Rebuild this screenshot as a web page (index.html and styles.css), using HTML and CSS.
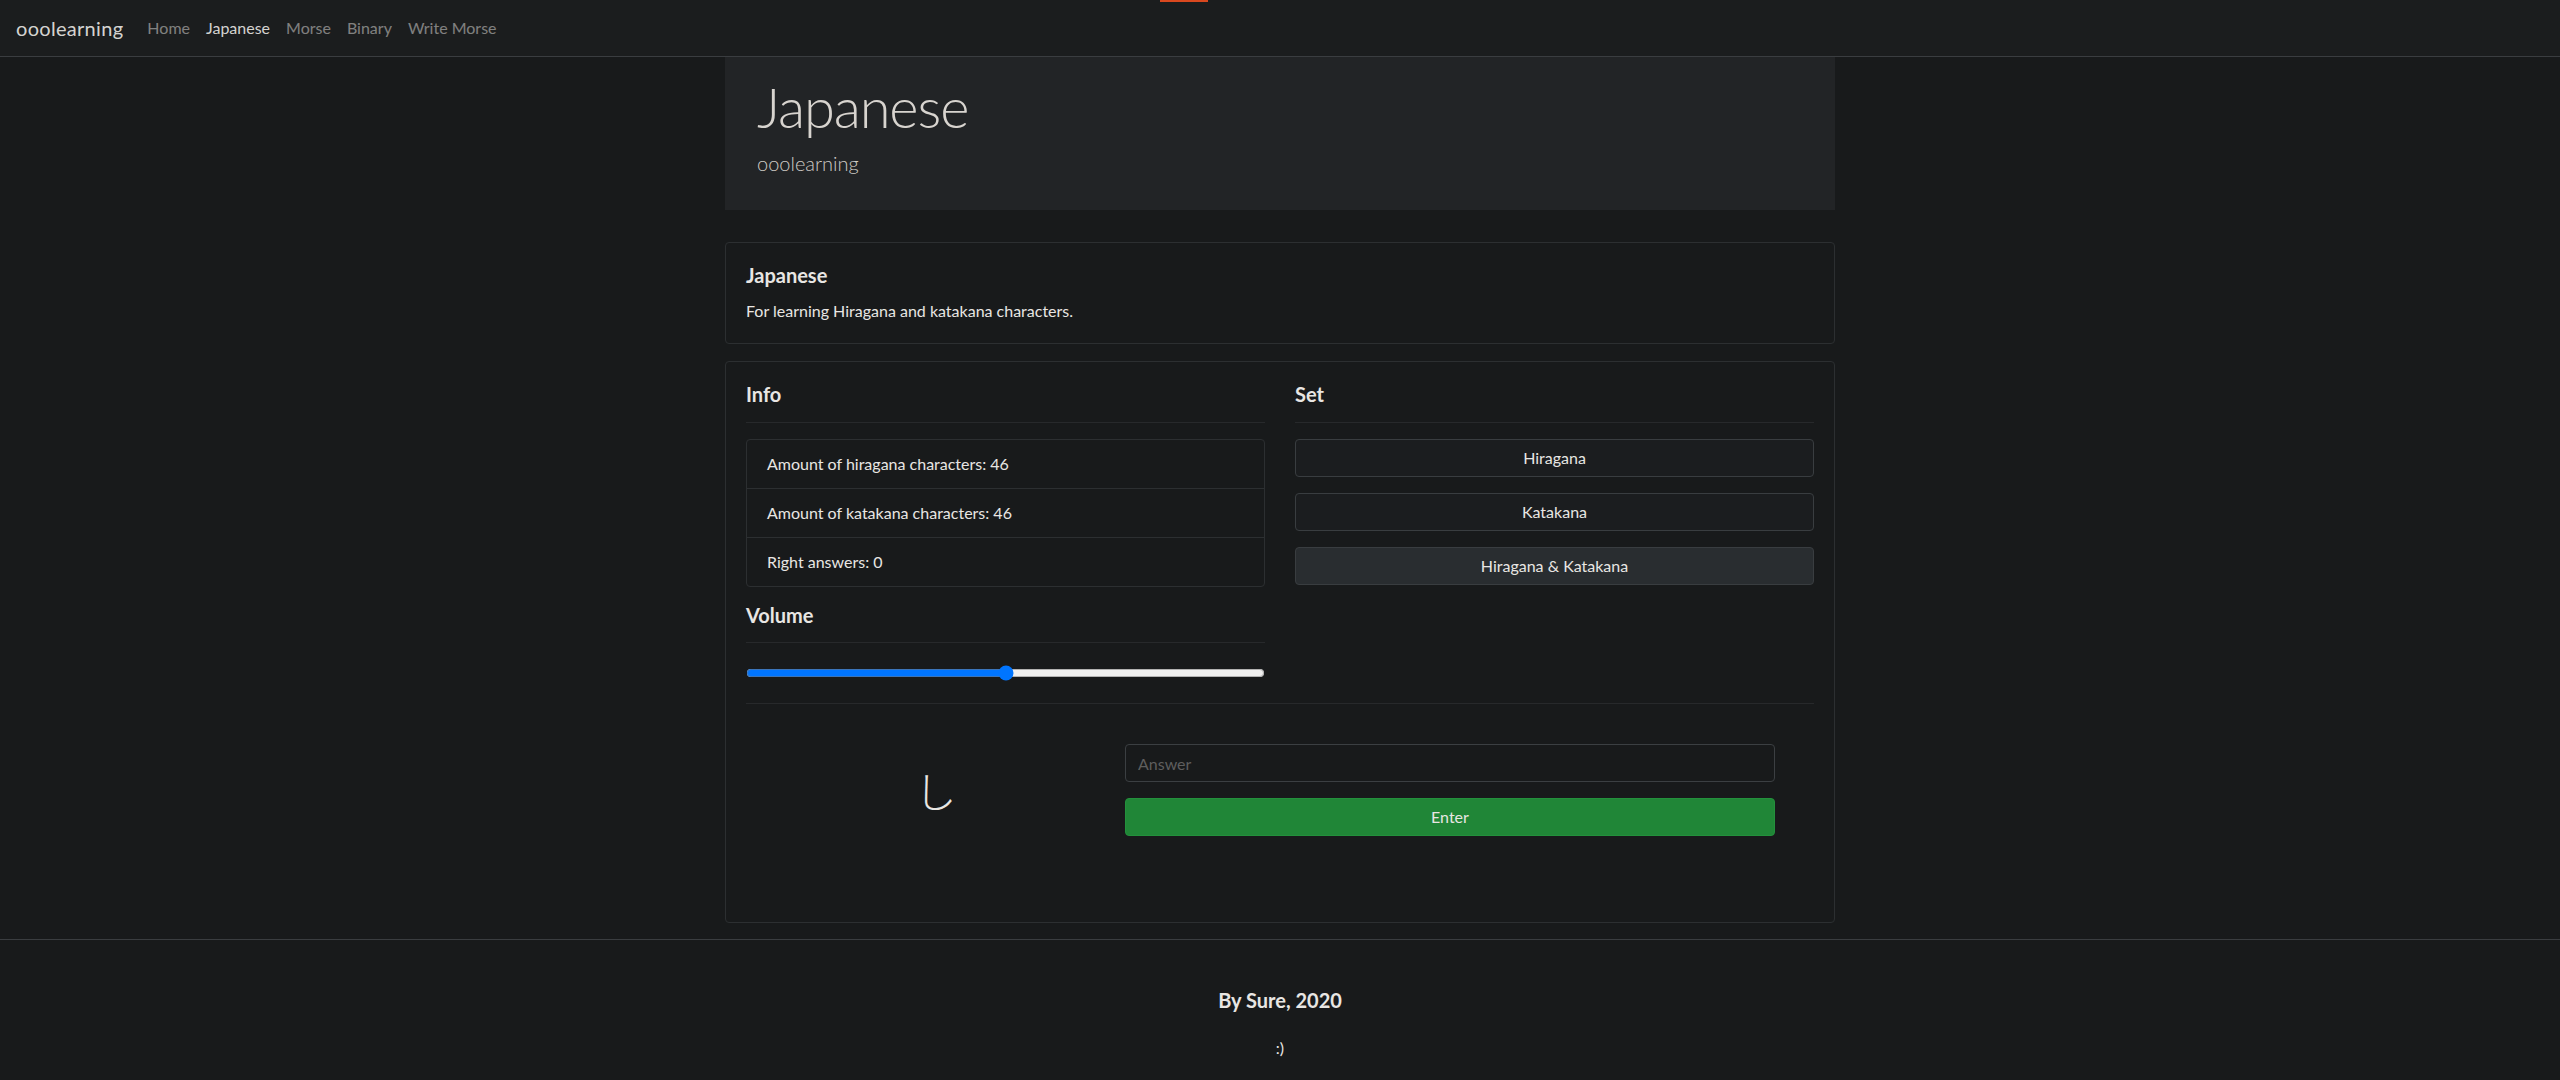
FILE: index.html
```html
<!DOCTYPE html>
<html lang="en">
<head>
<meta charset="utf-8">
<title>ooolearning - Japanese</title>
<link rel="stylesheet" href="styles.css">
</head>
<body>
<div class="topmark"></div>
<nav class="navbar">
  <a class="brand" href="#">ooolearning</a>
  <ul class="nav">
    <li><a class="nav-link" href="#">Home</a></li>
    <li><a class="nav-link active" href="#">Japanese</a></li>
    <li><a class="nav-link" href="#">Morse</a></li>
    <li><a class="nav-link" href="#">Binary</a></li>
    <li><a class="nav-link" href="#">Write Morse</a></li>
  </ul>
</nav>
<main class="container">
  <div class="jumbotron">
    <h1 class="display">Japanese</h1>
    <p class="lead">ooolearning</p>
  </div>
  <div class="card card-intro">
    <div class="card-body">
      <h5 class="card-title">Japanese</h5>
      <p class="card-text">For learning Hiragana and katakana characters.</p>
    </div>
  </div>
  <div class="card">
    <div class="card-body">
      <div class="cols">
        <div class="col">
          <h5 class="sec-title">Info</h5>
          <hr class="rule">
          <ul class="list-group">
            <li class="list-item">Amount of hiragana characters: 46</li>
            <li class="list-item">Amount of katakana characters: 46</li>
            <li class="list-item">Right answers: 0</li>
          </ul>
          <h5 class="sec-title">Volume</h5>
          <hr class="rule rule-tight">
          <input class="volume" type="range" min="0" max="100" value="50">
        </div>
        <div class="col">
          <h5 class="sec-title">Set</h5>
          <hr class="rule">
          <button class="btn-set" type="button">Hiragana</button>
          <button class="btn-set" type="button">Katakana</button>
          <button class="btn-set selected" type="button">Hiragana &amp; Katakana</button>
        </div>
      </div>
      <hr class="rule">
      <div class="quiz">
        <div class="char">し</div>
        <form class="answer-form">
          <input class="answer" type="text" placeholder="Answer">
          <button class="btn-enter" type="button">Enter</button>
        </form>
      </div>
    </div>
  </div>
</main>
<footer class="footer">
  <h5 class="footer-title">By Sure, 2020</h5>
  <p class="footer-text">:)</p>
</footer>
</body>
</html>
```
FILE: styles.css
```css
* { box-sizing: border-box; }
html, body { margin: 0; padding: 0; }
body {
  background: #181a1b;
  color: #e8e6e3;
  font-family: Lato, "Noto Sans", "Liberation Sans", sans-serif;
  font-size: 16px;
  line-height: 1.5;
  position: relative;
}
.topmark {
  position: absolute;
  top: 0;
  left: 1160px;
  width: 48px;
  height: 2px;
  background: #d9481f;
}
.navbar {
  display: flex;
  align-items: center;
  height: 57px;
  padding: 0 16px;
  background: #1b1d1e;
  border-bottom: 1px solid #3a3d40;
}
.brand {
  font-size: 20px;
  line-height: 30px;
  letter-spacing: 0.3px;
  color: rgba(232, 230, 227, 0.92);
  text-decoration: none;
  margin-right: 16px;
}
.nav { display: flex; list-style: none; margin: 0; padding: 0; }
.nav-link {
  display: block;
  padding: 8px 8px;
  color: rgba(232, 230, 227, 0.5);
  text-decoration: none;
}
.nav-link.active { color: rgba(232, 230, 227, 0.92); }

.container { width: 1110px; margin: 0 auto; }
.jumbotron {
  background: #222426;
  padding: 16px 32px;
  margin-bottom: 32px;
}
.display {
  margin: 0 0 8px;
  font-size: 56px;
  font-weight: 300;
  line-height: 1.2;
  letter-spacing: -1.1px;
  color: #d8d4cf;
}
.lead {
  margin: 0 0 16px;
  font-size: 20px;
  font-weight: 300;
  color: #cfcbc5;
}
.card {
  border: 1px solid #2c2f31;
  border-radius: 4px;
  background: #181a1b;
}
.card-intro { margin-bottom: 17px; }
.card-body { padding: 20px; }
.card-title, .sec-title {
  margin: 0;
  font-size: 20px;
  font-weight: 700;
  line-height: 1.2;
}
.card-title { margin-bottom: 12px; }
.card-text { margin: 0; }
.rule {
  border: 0;
  border-top: 1px solid #27292b;
  margin: 16px 0;
  height: 0;
}
.rule-tight { margin: 15px 0 16px; }
.cols {
  display: grid;
  grid-template-columns: 1fr 1fr;
  column-gap: 30px;
}
.list-group {
  list-style: none;
  margin: 0 0 16px;
  padding: 0;
  border: 1px solid #2c2f31;
  border-radius: 4px;
}
.list-item {
  padding: 12px 20px;
  border-top: 1px solid #2c2f31;
}
.list-item:first-child { border-top: 0; }
.volume {
  display: block;
  width: 100%;
  height: 28px;
  margin: 0;
}
.btn-set {
  display: block;
  width: 100%;
  height: 38px;
  margin: 0 0 16px;
  padding: 6px 12px;
  font: inherit;
  color: #e8e6e3;
  background: #1b1d1f;
  border: 1px solid #393d40;
  border-radius: 4px;
}
.btn-set.selected { background: #292d30; }
.quiz {
  display: grid;
  grid-template-columns: 379px 650px;
  align-items: center;
  padding: 24px 0 66px;
}
.char {
  text-align: center;
  font-family: "Noto Sans CJK JP", sans-serif;
  font-size: 42px;
  font-weight: 300;
  line-height: 1;
  color: #e8e6e3;
}
.answer-form { display: flex; flex-direction: column; gap: 16px; margin: 0; }
.answer {
  height: 38px;
  padding: 6px 12px;
  font: inherit;
  color: #e8e6e3;
  background: #181a1b;
  border: 1px solid #3b3f42;
  border-radius: 4px;
}
.answer::placeholder { color: #5e5e5e; }
.btn-enter {
  height: 38px;
  font: inherit;
  color: #e8e6e3;
  background: #208637;
  border: 1px solid #23913c;
  border-radius: 4px;
}
.footer {
  margin-top: 16px;
  border-top: 1px solid #3a3d40;
  padding: 48px 0 20px;
  text-align: center;
}
.footer-title {
  margin: 0 0 24px;
  font-size: 20px;
  font-weight: 700;
  line-height: 1.2;
}
.footer-text { margin: 0; }
```
